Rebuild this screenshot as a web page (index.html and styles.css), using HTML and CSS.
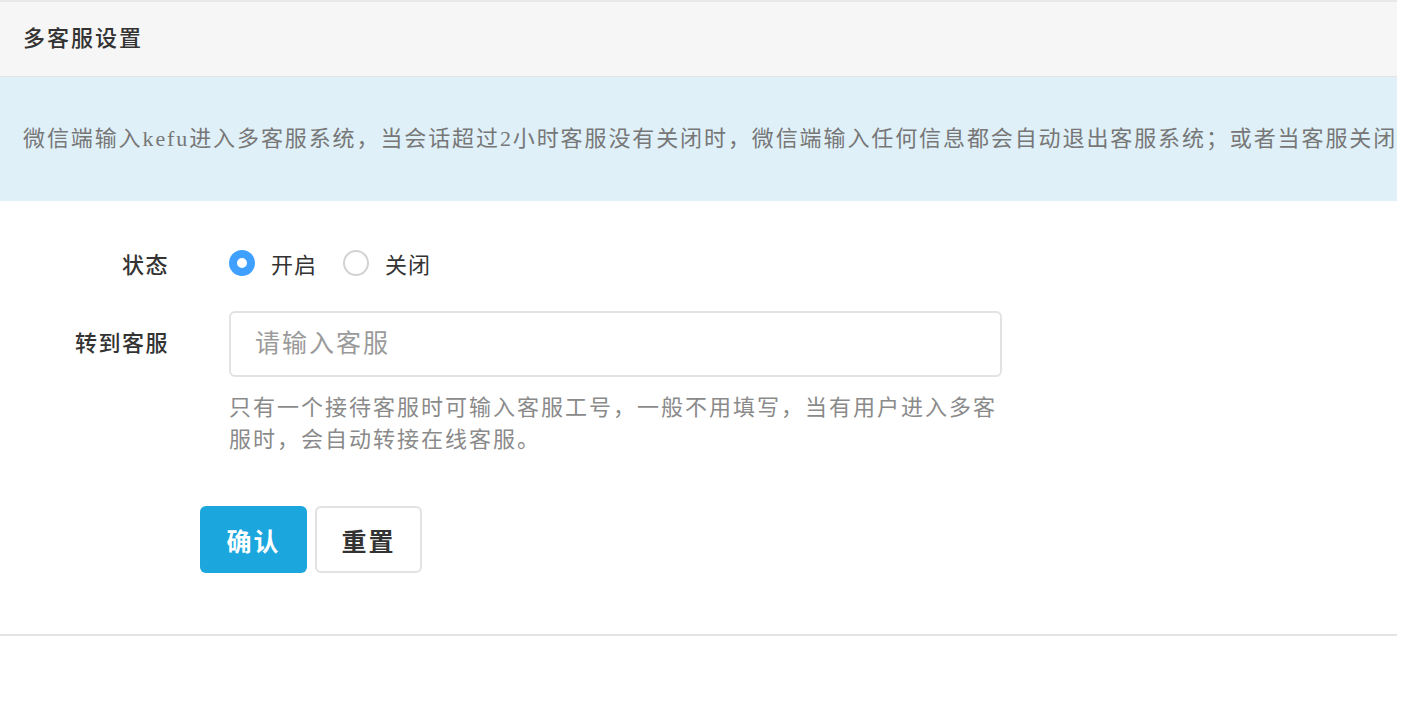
FILE: index.html
```html
<!DOCTYPE html>
<html lang="zh-CN">

<head>
    <meta charset="UTF-8">
    <meta name="viewport" content="width=device-width, initial-scale=1.0">
    <title>多客服设置</title>
    <link rel="stylesheet" href="styles.css">
</head>

<body>
    <div class="panel">
        <div class="panel-head">多客服设置</div>
        <div class="notice">微信端输入kefu进入多客服系统，当会话超过2小时客服没有关闭时，微信端输入任何信息都会自动退出客服系统；或者当客服关闭会话时，也会自动退出。</div>

        <form class="panel-body">
            <div class="form-row">
                <label class="form-label">状态</label>
                <div class="form-field radios">
                    <label class="radio">
                        <input type="radio" name="status" value="1" checked>
                        <span class="dot"></span>
                        <span>开启</span>
                    </label>
                    <label class="radio">
                        <input type="radio" name="status" value="0">
                        <span class="dot"></span>
                        <span>关闭</span>
                    </label>
                </div>
            </div>

            <div class="form-row top">
                <label class="form-label input-label">转到客服</label>
                <div class="form-field">
                    <input class="text-input" type="text" placeholder="请输入客服">
                    <p class="help">只有一个接待客服时可输入客服工号，一般不用填写，当有用户进入多客服时，会自动转接在线客服。</p>
                </div>
            </div>

            <div class="btn-row">
                <button type="button" class="btn btn-primary">确认</button>
                <button type="reset" class="btn btn-default">重置</button>
            </div>
        </form>
    </div>
</body>

</html>
```

FILE: styles.css
```css
body {
    margin: 0;
    padding: 0;
    background-color: #fff;
    font-family: "Liberation Serif", "Noto Sans CJK SC", serif;
    color: #333;
}

.panel {
    width: 1397px;
    border-top: 2px solid #e8e8e8;
    border-bottom: 2px solid #e4e4e4;
}

.panel-head {
    height: 74px;
    line-height: 74px;
    padding-left: 23px;
    background-color: #f6f6f6;
    border-bottom: 1px solid #e2e2e2;
    font-size: 22px;
    letter-spacing: 2px;
    font-weight: 500;
    color: #333;
}

.notice {
    height: 124px;
    line-height: 124px;
    padding-left: 23px;
    background-color: #dff0f8;
    color: #777;
    font-size: 22px;
    letter-spacing: 1.9px;
    white-space: nowrap;
    overflow: hidden;
}

.panel-body {
    padding: 44px 0 61px;
    font-size: 22px;
}

.form-row {
    display: flex;
    align-items: center;
}

.form-row.top {
    align-items: flex-start;
    margin-top: 30px;
}

.form-label {
    width: 169px;
    text-align: right;
    font-weight: 500;
    letter-spacing: 1.5px;
    color: #333;
    flex-shrink: 0;
}

.input-label {
    line-height: 66px;
}

.form-field {
    margin-left: 60px;
}

.radios {
    display: flex;
    align-items: center;
    height: 36px;
}

.radio {
    display: flex;
    align-items: center;
    margin-right: 26px;
    cursor: pointer;
    letter-spacing: 1px;
}

.radio input {
    display: none;
}

.radio .dot {
    width: 22px;
    height: 22px;
    border: 2px solid #d2d2d2;
    border-radius: 50%;
    margin-right: 16px;
    box-sizing: content-box;
}

.radio input:checked + .dot {
    border: 8px solid #40a0ff;
    width: 10px;
    height: 10px;
    background-color: #fff;
}

.text-input {
    display: block;
    width: 773px;
    height: 66px;
    box-sizing: border-box;
    padding: 0 24px;
    border: 2px solid #e2e2e2;
    border-radius: 6px;
    font-family: "Liberation Serif", "Noto Sans CJK SC", serif;
    font-size: 25px;
    letter-spacing: 2px;
    color: #333;
    outline: none;
}

.text-input::placeholder {
    color: #9a9a9a;
}

.help {
    width: 780px;
    margin: 15px 0 0;
    line-height: 32px;
    color: #8a8a8a;
    letter-spacing: 2px;
}

.btn-row {
    display: flex;
    margin: 50px 0 0 200px;
    gap: 8px;
}

.btn {
    height: 67px;
    width: 107px;
    border-radius: 6px;
    font-family: "Liberation Serif", "Noto Sans CJK SC", serif;
    font-size: 25px;
    font-weight: bold;
    letter-spacing: 2px;
    cursor: pointer;
}

.btn-primary {
    background-color: #1ba6de;
    color: #fff;
    border: none;
}

.btn-default {
    background-color: #fff;
    color: #333;
    border: 2px solid #e2e2e2;
}
```
